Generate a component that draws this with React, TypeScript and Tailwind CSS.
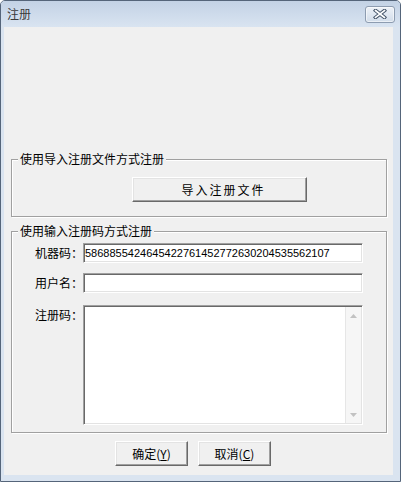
import React from "react";

function ClassicButton({
  children,
  className,
}: {
  children: React.ReactNode;
  className: string;
}) {
  return (
    <button
      className={`flex items-center justify-center bg-[#f0f0f0] border border-t-white border-l-white border-r-[#696969] border-b-[#696969] shadow-[inset_-1px_-1px_0_#a0a0a0,inset_1px_1px_0_#e3e3e3] text-[12px] leading-none text-black ${className}`}
    >
      {children}
    </button>
  );
}

const sunken =
  "border border-t-[#a0a0a0] border-l-[#a0a0a0] border-r-white border-b-white shadow-[inset_1px_1px_0_#696969,inset_-1px_-1px_0_#e3e3e3] bg-white";

function Arrow({ up }: { up: boolean }) {
  return (
    <div className="h-[17px] flex items-center justify-center">
      <svg width="7" height="4" viewBox="0 0 7 4">
        <path d={up ? "M0 4 L3.5 0 L7 4Z" : "M0 0 L3.5 4 L7 0Z"} fill="#c2c2c2" />
      </svg>
    </div>
  );
}

export default function App() {
  return (
    <div className="w-[401px] h-[482px] flex flex-col rounded-t-[5px] border border-[#55657a] bg-[#dae4f0] overflow-hidden font-['Noto_Sans_CJK_SC','Liberation_Sans',sans-serif] text-[12px] text-black">
      {/* title bar */}
      <div className="h-[26px] shrink-0 flex items-center justify-between pl-[6px] pr-[5px] bg-gradient-to-b from-[#c3d2e5] to-[#d9e4f1]">
        <span className="text-[12px] leading-none text-[#3a3a3a]">注册</span>
        <div className="w-[30px] h-[17px] rounded-[3px] border border-[#8d9cb0] bg-gradient-to-b from-[#eef2f8] to-[#d2ddea] shadow-[inset_0_0_0_1px_rgba(255,255,255,0.55)] flex items-center justify-center">
          <svg width="14" height="10" viewBox="0 0 14 10">
            <path d="M2.5 1.5 L11.5 8.5 M11.5 1.5 L2.5 8.5" stroke="#46566b" strokeWidth="3.6" strokeLinecap="square" />
            <path d="M2.5 1.5 L11.5 8.5 M11.5 1.5 L2.5 8.5" stroke="#ffffff" strokeWidth="1.6" strokeLinecap="square" />
          </svg>
        </div>
      </div>

      {/* frame + client */}
      <div className="flex-1 flex pl-[3px] pr-[7px] pb-[6px]">
        <div className="flex-1 bg-[#f0f0f0] flex flex-col">
          {/* group 1 */}
          <fieldset className="mt-[125px] ml-[7px] w-[376px] border border-[#a0a0a0] shadow-[inset_1px_1px_0_#fff,1px_1px_0_#fff] pt-[11px] pb-[14px]">
            <legend className="ml-[6px] px-[2px] bg-[#f0f0f0] leading-[14px] text-[12px]">
              使用导入注册文件方式注册
            </legend>
            <ClassicButton className="ml-[120px] w-[175px] h-[25px] tracking-[2px] pl-[8px]">
              导入注册文件
            </ClassicButton>
          </fieldset>

          {/* group 2 */}
          <fieldset className="mt-[7px] ml-[7px] w-[376px] border border-[#a0a0a0] shadow-[inset_1px_1px_0_#fff,1px_1px_0_#fff] pt-[5px] pb-[7px]">
            <legend className="ml-[6px] px-[2px] bg-[#f0f0f0] leading-[14px] text-[12px]">
              使用输入注册码方式注册
            </legend>
            <div className="flex items-center ml-[23px] h-[20px]">
              <span className="w-[48px] leading-[14px]">机器码：</span>
              <div className={`${sunken} w-[280px] h-[20px] flex items-center pl-[1px] font-['Liberation_Sans',sans-serif] text-[11px] leading-none`}>
                5868855424645422761452772630204535562107
              </div>
            </div>
            <div className="flex items-center ml-[23px] h-[20px] mt-[10px]">
              <span className="w-[48px] leading-[14px]">用户名：</span>
              <div className={`${sunken} w-[280px] h-[20px]`} />
            </div>
            <div className="flex items-start ml-[23px] mt-[12px]">
              <span className="w-[48px] leading-[14px] mt-[3px]">注册码：</span>
              <div className={`${sunken} w-[280px] h-[120px] flex p-[1px]`}>
                <div className="flex-1" />
                <div className="w-[16px] flex flex-col justify-between bg-[#f6f6f6] border-l border-[#e6e6e6]">
                  <Arrow up />
                  <Arrow up={false} />
                </div>
              </div>
            </div>
          </fieldset>

          {/* bottom buttons */}
          <div className="flex gap-[10px] mt-[8px] ml-[111px]">
            <ClassicButton className="w-[73px] h-[25px]">
              确定(<span className="underline">Y</span>)
            </ClassicButton>
            <ClassicButton className="w-[73px] h-[25px]">
              取消(<span className="underline">C</span>)
            </ClassicButton>
          </div>
        </div>
      </div>
    </div>
  );
}
